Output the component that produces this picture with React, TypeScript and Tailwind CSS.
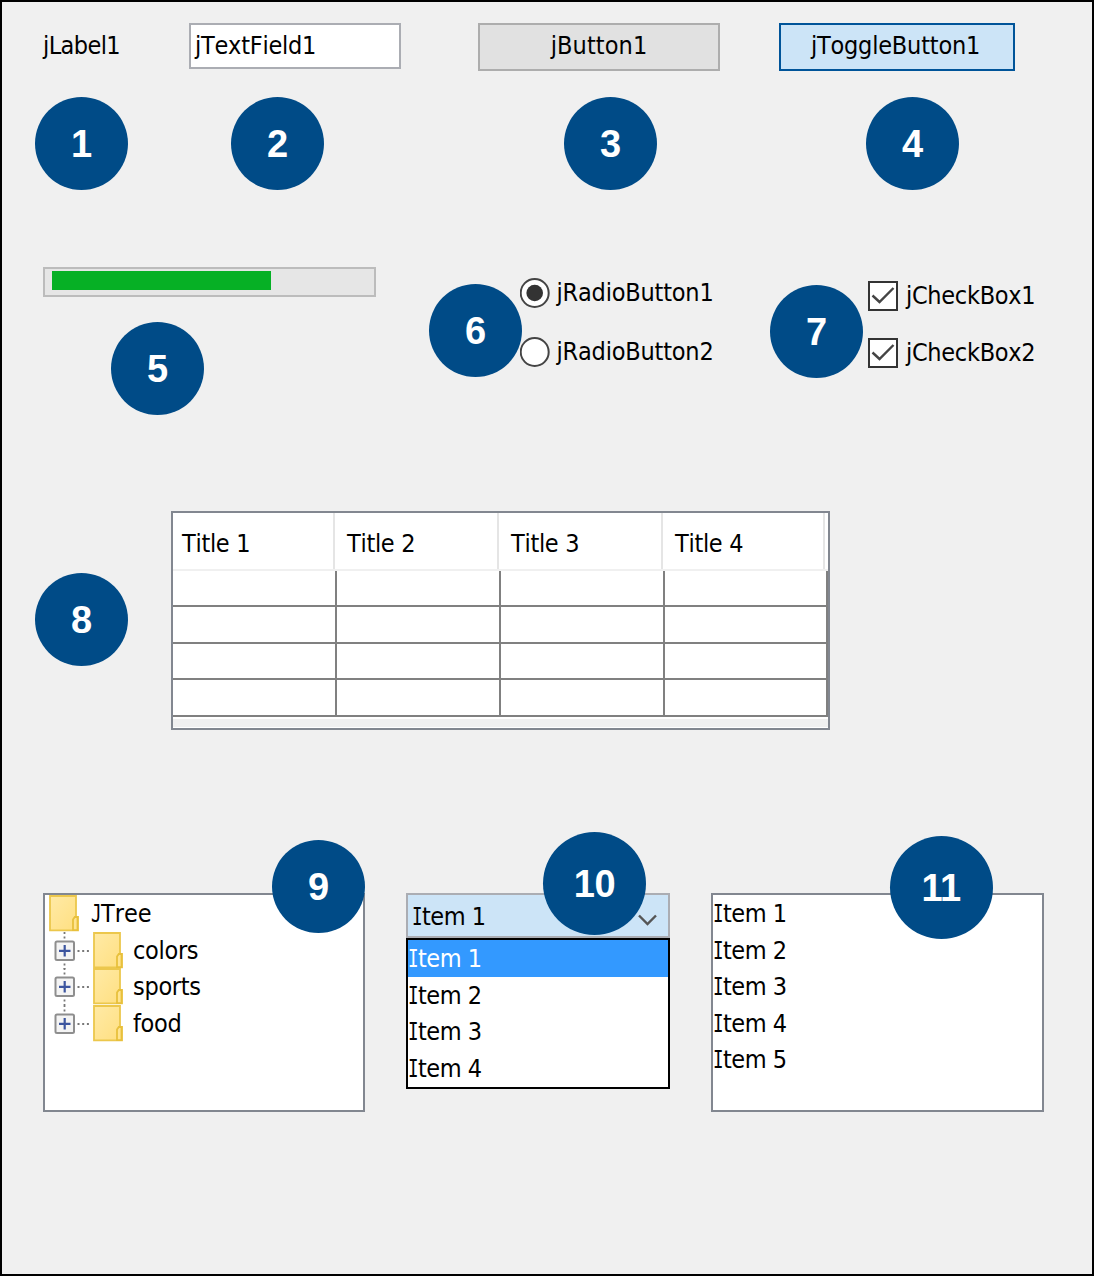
import type { ReactNode } from "react";

function Callout({ n, className = "" }: { n: number; className?: string }) {
  return (
    <div
      className={`flex shrink-0 items-center justify-center rounded-full bg-[#004b87] font-['Liberation_Sans',Arial,sans-serif] text-[38px] leading-none font-bold text-white [font-kerning:normal] ${n > 9 ? "size-[103px] tracking-[-0.5px]" : "size-[93px]"} ${className}`}
    >
      {n}
    </div>
  );
}

/* Capital with slab serifs, as the dialog font draws I and J. */
function Slab({ children }: { children: ReactNode }) {
  return (
    <span className="-mr-[5px] -ml-[1px] inline-block w-[15px] origin-left scale-x-[0.7] font-['DejaVu_Sans_Mono',monospace] tracking-normal">
      {children}
    </span>
  );
}

function Item({ n }: { n: number }) {
  return (
    <span className="tracking-[-0.5px]">
      <Slab>I</Slab>tem {n}
    </span>
  );
}

function Radio({ label, checked }: { label: string; checked?: boolean }) {
  return (
    <div className="flex h-[30px] items-center">
      <svg className="size-[30px] shrink-0" viewBox="0 0 30 30">
        <circle cx="14.7" cy="15" r="14" fill="#fff" stroke="#444" strokeWidth="2" />
        {checked && <circle cx="14.7" cy="15" r="8.3" fill="#333" />}
      </svg>
      <span className="ml-[7px] tracking-[-0.2px]">{label}</span>
    </div>
  );
}

function Check({ label }: { label: string }) {
  return (
    <div className="flex h-[30px] items-center">
      <svg className="size-[30px] shrink-0" viewBox="0 0 30 30">
        <rect x="1" y="1" width="28" height="28" fill="#fff" stroke="#333" strokeWidth="2" />
        <path d="M4.5 14.5 L11.5 21 L25.5 7" fill="none" stroke="#444" strokeWidth="2.4" />
      </svg>
      <span className="ml-[8px] pb-px tracking-[-0.3px]">{label}</span>
    </div>
  );
}

function Folder() {
  return (
    <svg className="h-[37px] w-[30px] shrink-0" viewBox="0 0 30 37">
      <defs>
        <linearGradient id="folder" x1="0" y1="0" x2="1" y2="1">
          <stop offset="0" stopColor="#ffeaa6" />
          <stop offset="1" stopColor="#ffdf80" />
        </linearGradient>
      </defs>
      <path d="M1 1H27V22H29V35.4H1Z" fill="url(#folder)" stroke="#ecc74c" strokeWidth="1.8" />
      <path d="M24 35.2V24.5L25.8 22H28.5V35.2Z" fill="#ffe491" stroke="#e8c03c" strokeWidth="1.8" />
    </svg>
  );
}

function Expander({ last }: { last: boolean }) {
  return (
    <svg className="h-[37px] w-[43px] shrink-0" viewBox="0 0 43 37">
      <path d="M14.5 0V9" stroke="#777" strokeWidth="1.8" strokeDasharray="2 2.5" />
      {!last && <path d="M14.5 31.5V37" stroke="#777" strokeWidth="1.8" strokeDasharray="2 2.5" />}
      <path d="M27.5 19H40" stroke="#777" strokeWidth="1.8" strokeDasharray="2 2.7" />
      <rect x="5.5" y="9.5" width="18.5" height="18.5" rx="1.5" fill="#f4f4f4" stroke="#8e8e8e" strokeWidth="2" />
      <path d="M9 18.8H20.5M14.7 13V24.5" stroke="#3c559f" strokeWidth="2.2" />
    </svg>
  );
}

const columns = ["Title 1", "Title 2", "Title 3", "Title 4"];
const branches = ["colors", "sports", "food"];

export default function App() {
  return (
    <div className="h-[1276px] w-[1094px] overflow-hidden border-2 border-black bg-[#f0f0f0] font-['DejaVu_Sans_Condensed','DejaVu_Sans',sans-serif] text-[25px] leading-[36px] whitespace-nowrap text-black [font-kerning:none]">
      <div className="mt-[20px] flex h-[49px] items-start pl-[40px]">
        <div className="mt-px w-[147px] pl-px leading-[46px] tracking-[-0.6px]">jLabel1</div>
        <div className="mt-px h-[46px] w-[212px] border-2 border-[#abadb3] bg-white pl-1 leading-[42px] tracking-[-0.25px]">
          jTextField1
        </div>
        <div className="mt-px ml-[77px] h-[48px] w-[242px] border-2 border-[#adadad] bg-[#e1e1e1] text-center leading-[42px] tracking-[0.1px]">
          jButton1
        </div>
        <div className="mt-px ml-[59px] h-[48px] w-[236px] border-2 border-[#005499] bg-[#cce4f7] pr-[3px] text-center leading-[42px] tracking-[-0.2px]">
          jToggleButton1
        </div>
      </div>

      <div className="mt-[26px] flex pl-[33px]">
        <Callout n={1} />
        <Callout n={2} className="ml-[103px]" />
        <Callout n={3} className="ml-[240px]" />
        <Callout n={4} className="ml-[209px]" />
      </div>

      <div className="mt-[77px] flex h-[244px] items-start pl-[41px]">
        <div>
          <div className="h-[30px] w-[333px] border-2 border-[#bcbcbc] bg-[#e6e6e6] pt-[2.4px] pl-[7px]">
            <div className="h-[18.6px] w-[219px] bg-[#06b025]" />
          </div>
          <Callout n={5} className="mt-[25px] ml-[68px]" />
        </div>
        <Callout n={6} className="mt-[17px] ml-[53px]" />
        <div className="mt-[11px] -ml-[2.5px] flex w-[250.5px] flex-col gap-[29px]">
          <Radio label="jRadioButton1" checked />
          <Radio label="jRadioButton2" />
        </div>
        <Callout n={7} className="mt-[18px]" />
        <div className="mt-[14px] ml-[5px] flex flex-col gap-[27px]">
          <Check label="jCheckBox1" />
          <Check label="jCheckBox2" />
        </div>
      </div>

      <div className="flex items-start pl-[33px]">
        <Callout n={8} className="mt-[62px]" />
        <div className="ml-[43px] h-[219px] w-[659px] border-2 border-[#828790] bg-white pb-[2px]">
          <div className="flex h-[58px] border-b-2 border-[#f0f0f0]">
            {columns.map((c, i) => (
              <div
                key={c}
                className={`border-r-2 border-[#e5e5e5] leading-[62px] tracking-[-0.3px] ${i === 0 ? "w-[162px] pl-[9px]" : i === 3 ? "w-[162px] pl-[12px]" : "w-[164px] pl-[12px]"}`}
              >
                {c}
              </div>
            ))}
          </div>
          {[0, 1, 2, 3].map((r) => (
            <div key={r} className={`flex border-b-2 border-[#808080] ${r === 0 ? "h-[36px]" : "h-[36.5px]"}`}>
              <div className="w-[164px] border-r-2 border-[#808080]" />
              <div className="w-[164px] border-r-2 border-[#808080]" />
              <div className="w-[164px] border-r-2 border-[#808080]" />
              <div className="w-[163px] border-r-2 border-[#808080]" />
            </div>
          ))}
          <div className="mt-[2px] h-[8px] bg-[#f0f0f0]" />
        </div>
      </div>

      <div className="mt-[163px] flex items-start pl-[41px]">
        <div className="relative h-[219px] w-[322px] border-2 border-[#828790] bg-white">
          <div className="flex h-[37px] items-center pl-[4px]">
            <Folder />
            <span className="ml-[13px] pt-px">
              <Slab>J</Slab>Tree
            </span>
          </div>
          {branches.map((b, i) => (
            <div key={b} className="flex h-[36.5px] items-center pl-[5px]">
              <Expander last={i === branches.length - 1} />
              <Folder />
              <span className="ml-[10px] pt-px tracking-[-0.3px]">{b}</span>
            </div>
          ))}
          <Callout n={9} className="absolute -top-[55px] left-[227px]" />
        </div>

        <div className="relative ml-[41px] w-[264px]">
          <div className="h-[45px] border-2 border-[#abadb3] bg-[#cce4f7] pl-[5px] leading-[43px]">
            <Item n={1} />
          </div>
          <svg className="absolute top-[20px] left-[231px] h-[14px] w-[22px]" viewBox="0 0 22 14">
            <path d="M2 2.5L10.5 11L19 2.5" fill="none" stroke="#555" strokeWidth="2.4" />
          </svg>
          <div className="h-[151px] border-2 border-black bg-white leading-[38px]">
            <div className="h-[36.5px] bg-[#3399ff] pl-px text-white">
              <Item n={1} />
            </div>
            {[2, 3, 4].map((n) => (
              <div key={n} className="h-[36.5px] pl-px">
                <Item n={n} />
              </div>
            ))}
          </div>
          <Callout n={10} className="absolute -top-[61px] left-[137px]" />
        </div>

        <div className="relative ml-[41px] h-[219px] w-[333px] border-2 border-[#828790] bg-white leading-[38px]">
          {[1, 2, 3, 4, 5].map((n) => (
            <div key={n} className="h-[36.5px] pl-px">
              <Item n={n} />
            </div>
          ))}
          <Callout n={11} className="absolute -top-[59px] left-[176.5px]" />
        </div>
      </div>
    </div>
  );
}
